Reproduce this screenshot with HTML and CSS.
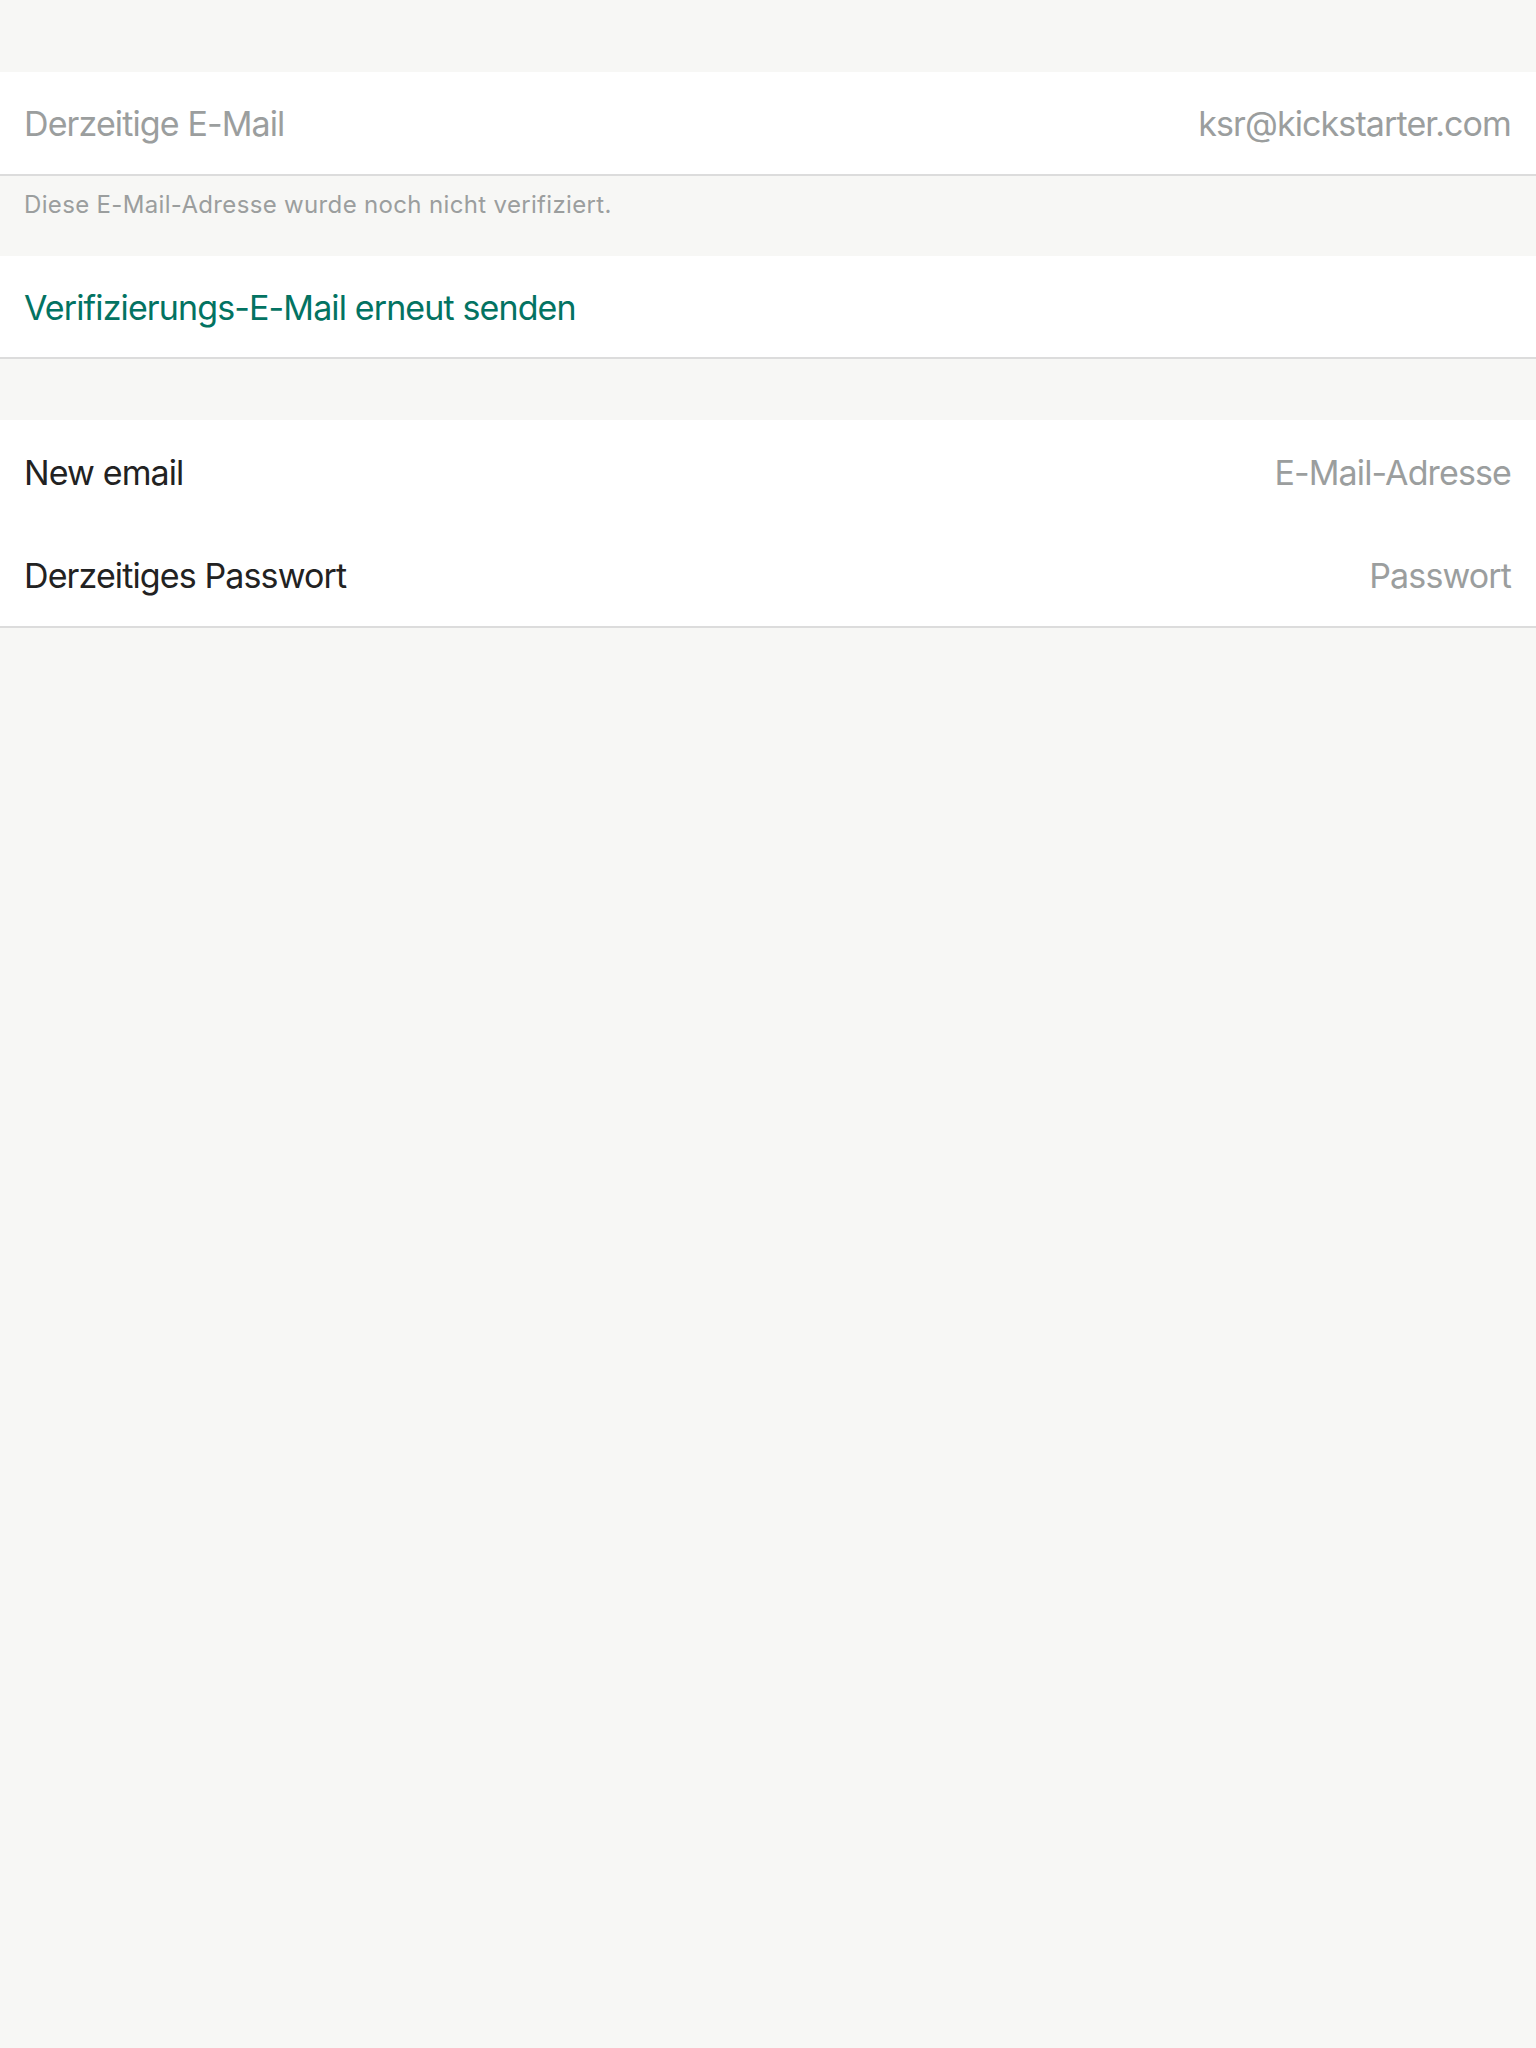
FILE: index.html
```html
<!DOCTYPE html>
<html lang="de">
<head>
<meta charset="utf-8">
<title>E-Mail ändern</title>
<link rel="stylesheet" href="styles.css">
</head>
<body>
<div class="screen">
  <div class="spacer-top"></div>
  <section class="group">
    <div class="row row-first">
      <span class="label muted">Derzeitige E-Mail</span>
      <span class="value muted">ksr@kickstarter.com</span>
    </div>
  </section>
  <div class="footer-note">Diese E-Mail-Adresse wurde noch nicht verifiziert.</div>
  <section class="group">
    <div class="row row-action">
      <span class="label action">Verifizierungs-E-Mail erneut senden</span>
    </div>
  </section>
  <div class="spacer-mid"></div>
  <section class="group">
    <div class="row row-input-a">
      <span class="label">New email</span>
      <span class="value placeholder">E-Mail-Adresse</span>
    </div>
    <div class="row row-input-b">
      <span class="label">Derzeitiges Passwort</span>
      <span class="value placeholder">Passwort</span>
    </div>
  </section>
</div>
</body>
</html>
```
FILE: styles.css
```css
html, body {
  margin: 0;
  padding: 0;
  background: #f7f7f5;
}
body {
  font-family: Inter, "Noto Sans", "Liberation Sans", sans-serif;
  -webkit-font-smoothing: antialiased;
}
.screen {
  display: flex;
  flex-direction: column;
  min-height: 2048px;
}
.spacer-top { height: 72px; }
.spacer-mid { height: 61px; }
.group {
  background: #ffffff;
  border-bottom: 2px solid #dcdcdc;
  display: flex;
  flex-direction: column;
}
.row {
  display: flex;
  align-items: center;
  justify-content: space-between;
  padding: 0 25px 0 24px;
  font-size: 34px;
  letter-spacing: -0.88px;
  color: #222222;
}
.row-first { height: 102px; }
.row-action { height: 101px; padding-top: 2px; box-sizing: border-box; }
.row-input-a { height: 104px; }
.row-input-b { height: 102px; }
.muted, .placeholder { color: #9b9e9e; }
.action { color: #037362; }
.footer-note {
  height: 80px;
  box-sizing: border-box;
  padding: 14px 24px 0;
  font-size: 24px;
  line-height: 29px;
  letter-spacing: 0.34px;
  color: #9b9e9e;
}
```
